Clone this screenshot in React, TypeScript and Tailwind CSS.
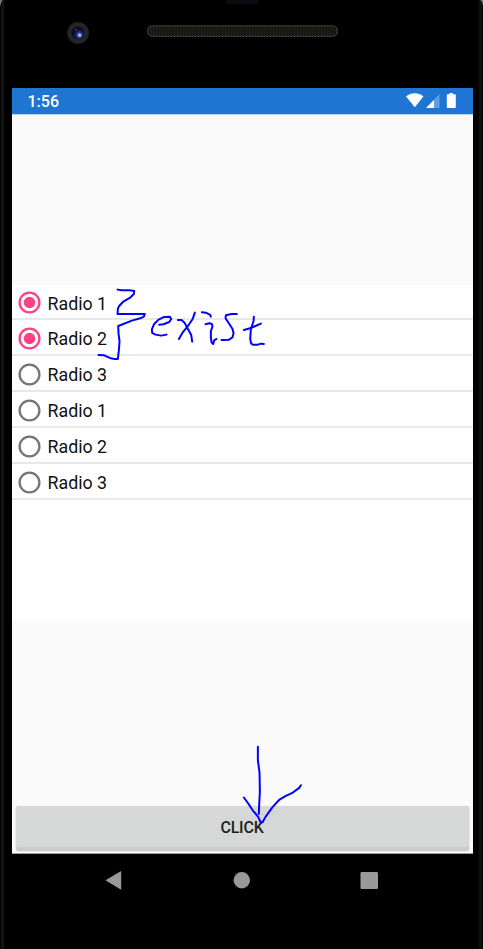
type RadioItem = {
  label: string;
  checked: boolean;
};

const items: RadioItem[] = [
  { label: "Radio 1", checked: true },
  { label: "Radio 2", checked: true },
  { label: "Radio 3", checked: false },
  { label: "Radio 1", checked: false },
  { label: "Radio 2", checked: false },
  { label: "Radio 3", checked: false },
];

function PhoneTop() {
  return (
    <div className="h-[88px] shrink-0">
      <svg width="483" height="88" viewBox="0 0 483 88" aria-hidden="true">
        <defs>
          <radialGradient id="lens" cx="0.6" cy="0.65" r="0.6">
            <stop offset="0" stopColor="#8fa0f0" />
            <stop offset="0.25" stopColor="#3540a0" />
            <stop offset="0.6" stopColor="#12143c" />
            <stop offset="1" stopColor="#08080f" />
          </radialGradient>
          <pattern id="mesh" width="3" height="2" patternUnits="userSpaceOnUse">
            <rect width="3" height="2" fill="#15130f" />
            <rect width="1" height="1" fill="#2e2a22" />
            <rect x="1" y="1" width="1" height="1" fill="#24211b" />
          </pattern>
        </defs>
        <path d="M225 0h34q-1 4-5 4h-24q-4 0-5-4z" fill="#0c0d12" />
        <circle cx="78" cy="33" r="11" fill="#222222" />
        <circle cx="78" cy="33" r="8.5" fill="none" stroke="#2c2c2c" />
        <circle cx="78" cy="33" r="6.3" fill="url(#lens)" />
        <circle cx="79.7" cy="35.3" r="1.7" fill="#a5b2f7" />
        <circle cx="75.6" cy="29.8" r="0.8" fill="#4c5fc6" />
        <rect x="147.5" y="25.8" width="190" height="10.6" rx="5" fill="url(#mesh)" stroke="#383632" strokeWidth="1.2" />
      </svg>
    </div>
  );
}

function StatusBar() {
  return (
    <div className="flex h-[26px] shrink-0 items-center justify-between bg-[#1e76d2] pl-[15.5px] text-white">
      <span className="pt-[2px] text-[16px] leading-[26px] font-medium">1:56</span>
      <svg width="68" height="26" viewBox="0 0 68 26" fill="#ffffff" aria-hidden="true">
        <path d="M1 8.6C6 4.2 13.6 4.2 18.4 8.6L9.8 19.2z" />
        <path d="M34.5 6v14H21z" opacity="0.3" />
        <path d="M29 11.9V20h-8z" />
        <path d="M44.4 5h3.4v1.3H50q.8 0 .8.8v12q0 .9-.8.9h-7.4q-.8 0-.8-.9v-12q0-.8.8-.8h1.8z" />
      </svg>
    </div>
  );
}

function RadioRow({ label, checked }: RadioItem) {
  return (
    <li className="flex h-9 items-center border-b-2 border-[#e8e8e8] pt-[2px] pl-[6px] first:h-[35px]">
      <svg width="23" height="23" viewBox="0 0 23 23" className="shrink-0" aria-hidden="true">
        <circle cx="11.5" cy="11.5" r="9.9" fill="none" stroke={checked ? "#ff4081" : "#757575"} strokeWidth="2.3" />
        {checked && <circle cx="11.5" cy="11.5" r="5.7" fill="#ff4081" />}
      </svg>
      <span className="ml-[6.5px] pt-[2px] text-[17.8px] leading-6 text-[#111111]">{label}</span>
    </li>
  );
}

function NavBar() {
  return (
    <svg width="461" height="52" viewBox="0 0 461 52" fill="#999999" className="ml-3 shrink-0" aria-hidden="true">
      <path d="M93.5 26.3 108.7 17.2q.5-.2.5.5v17.5q0 .7-.5.4z" />
      <circle cx="229.8" cy="26.2" r="8.2" />
      <rect x="348.5" y="18" width="17.5" height="17" rx="1.2" />
    </svg>
  );
}

// Pen strokes drawn on top of the phone
function Annotations() {
  return (
    <svg
      className="pointer-events-none absolute inset-0"
      width="483"
      height="949"
      viewBox="0 0 483 949"
      fill="none"
      stroke="#0000ff"
      strokeWidth="6"
      strokeLinecap="round"
      strokeLinejoin="round"
      role="img"
      aria-label="exist"
    >
      <g transform="translate(90.2 280.3) scale(0.33333)">
        <path d="M82 28 94 30 118 30 132 32 131 41 121 51 98 65 87 77 83 86 82 101H164L161 109 150 114 125 121 84 137 85 160 88 183 86 210 83 236H73L62 234 42 225 25 224" />
        <path d="M207 133 220 132 237 125 243 116 239 109 222 110 205 118 192 131 185 147 186 158 196 163 213 166 229 163" />
        <path d="M263 119 274 119 283 127 292 144 303 164 306 184" />
        <path d="M314 97 307 117 291 140 277 157 266 176" />
        <path d="M335 96 347 97 360 104 362 109" />
        <path d="M346 132 357 129 365 131 367 138 362 153 362 170 364 186 369 191 372 180 379 176" />
        <path d="M440 101 424 101 407 105 406 114 414 126 427 146 430 159 427 171 417 178 394 179" />
        <path d="M491 109 490 123 482 147 480 176 483 190 488 193 503 193 512 190 521 191" />
        <path d="M461 149 479 144 496 137 512 130" />
      </g>
      <g transform="translate(200.2 735.2) scale(0.33333)">
        <path d="M173 35 173 75 178 112 179 170 177 207 176 236" />
        <path d="M131 187 142 202 158 226 174 245 181 261 187 261 196 245 217 216 238 193 257 182 278 172 297 158 302 150" />
      </g>
    </svg>
  );
}

export default function App() {
  return (
    <div className="relative flex h-[949px] w-[483px] flex-col overflow-hidden bg-black font-[Roboto,sans-serif]">
      <PhoneTop />
      <div className="ml-3 flex h-[766px] w-[461px] shrink-0 flex-col border-b border-[#a0a0a0] bg-[#fafafa]">
        <StatusBar />
        <div className="h-[171px] shrink-0 border-t border-[#b5d3f2]" />
        <ul className="h-[336px] shrink-0 bg-white">
          {items.map((item, i) => (
            <RadioRow key={i} {...item} />
          ))}
        </ul>
        <div className="flex flex-1 flex-col justify-end pr-[4.5px] pb-[3px] pl-[3.5px]">
          <button className="h-11 rounded-[2px] bg-[#d6d8d7] text-[16px] leading-[42px] font-medium tracking-[-0.2px] text-[#222222] shadow-[inset_0_-3px_1px_#cacbcb,0_1px_2px_#bbbbbb]">
            CLICK
          </button>
        </div>
      </div>
      <NavBar />
      {/* metal edges of the case */}
      <div className="absolute inset-y-0 left-0 w-[6px] bg-linear-to-r from-[#040404] via-[#1a1a1a] to-[#000000]" />
      <div className="absolute inset-y-0 right-0 w-[6px] bg-linear-to-r from-[#000000] via-[#161616] to-[#040404]" />
      <svg className="absolute inset-x-0 top-0" width="483" height="8" viewBox="0 0 483 8" fill="#777777" aria-hidden="true">
        <path d="M0 0h2.5Q.6 3 0 7z" />
        <path d="M483 0h-2.5q1.9 2 2.5 6z" />
      </svg>
      <Annotations />
    </div>
  );
}
